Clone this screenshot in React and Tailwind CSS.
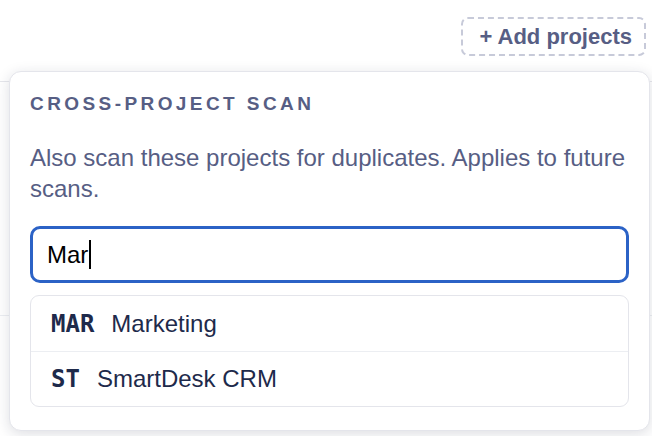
export default function App() {
  const matches = [
    { key: 'MAR', name: 'Marketing' },
    { key: 'ST', name: 'SmartDesk CRM' },
  ];

  return (
    <div className="relative h-[436px] w-[652px] overflow-hidden bg-white font-['Liberation_Sans',Arial,sans-serif]">
      {/* toolbar */}
      <div className="flex justify-end pt-[17px] pr-[6px]">
        <button className="rounded-[7px] border-2 border-dashed border-[#c7cad9] pl-[16px] pr-[12px] py-[5px] text-[22px] font-bold leading-[25px] text-[#575e84]">
          + Add projects
        </button>
      </div>

      {/* page content behind the popover */}
      <div className="mt-[24px]">
        <div className="h-[2px] border-b border-[#e6e7ec]" />
        <div className="h-[234px] border-b border-[#eceef2]" />
      </div>

      {/* popover */}
      <div className="absolute left-[9px] top-[71px] w-[641px] rounded-[12px] border border-[#e4e5eb] bg-white px-[20px] pt-[21px] pb-[23px] shadow-[0_3px_14px_rgba(30,35,60,0.15)]">
        <h3 className="text-[19px] font-bold uppercase leading-[22px] tracking-[0.18em] text-[#575e84]">
          Cross-project scan
        </h3>
        <p className="mt-[27px] text-[24px] leading-[31px] text-[#575e84]">
          Also scan these projects for duplicates. Applies to future scans.
        </p>

        <div className="mt-[22px] flex h-[57px] items-center rounded-[10px] border-[3px] border-[#2b62c6] px-[14px]">
          <span className="text-[24px] text-black">Mar</span>
          <span className="ml-[1px] h-[29px] w-[2px] bg-black" />
        </div>

        <ul className="mt-[12px] rounded-[9px] border border-[#e4e5eb]">
          {matches.map((m, i) => (
            <li
              key={m.key}
              className={`flex h-[55px] items-center gap-[17px] px-5 ${i > 0 ? 'border-t border-[#eceef2]' : ''}`}
            >
              <span className="font-['DejaVu_Sans_Mono',monospace] text-[24px] font-bold text-[#1e2a4b]">
                {m.key}
              </span>
              <span className="text-[24px] text-[#1e2a4b]">{m.name}</span>
            </li>
          ))}
        </ul>
      </div>
    </div>
  );
}
